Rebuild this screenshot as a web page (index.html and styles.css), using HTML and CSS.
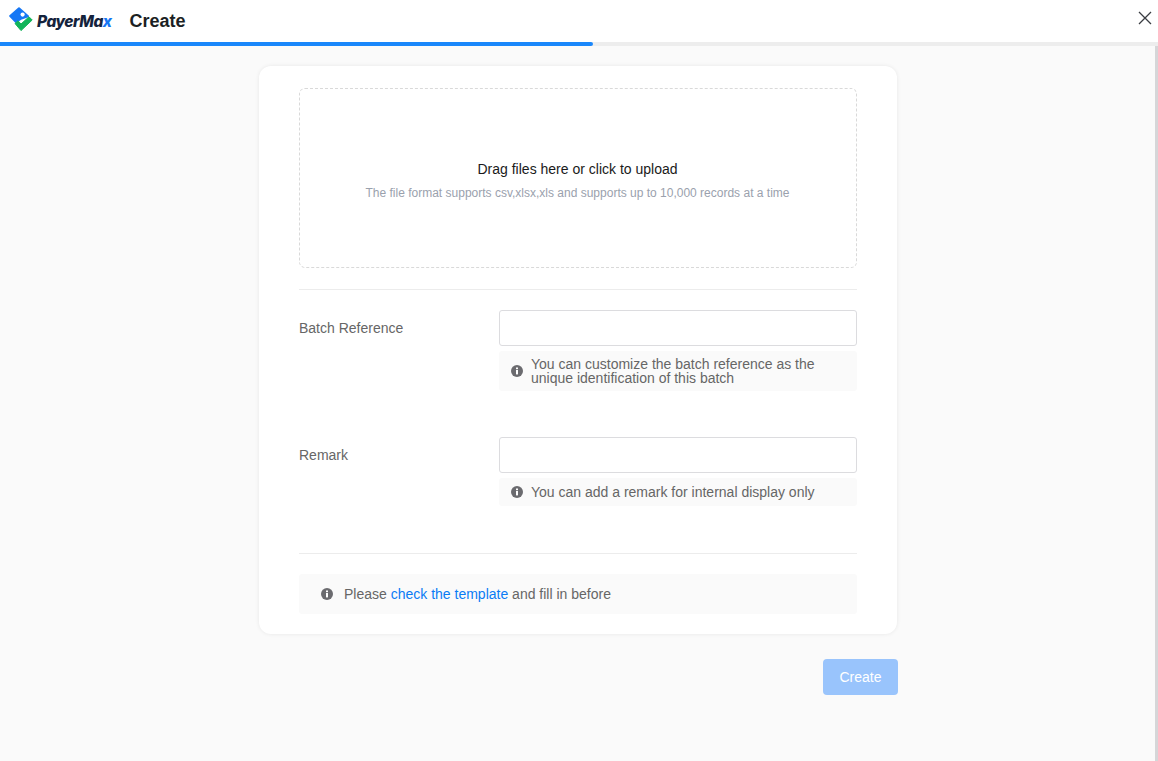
FILE: index.html
```html
<!DOCTYPE html>
<html lang="en">
<head>
<meta charset="utf-8">
<title>Create</title>
<link rel="stylesheet" href="styles.css">
</head>
<body>
<header class="topbar">
  <div class="brand">
    <svg class="logo" width="24" height="25" viewBox="0 0 24 25">
      <path d="M10 1.2 L1.2 9 L7 15 L12.5 11.5 L19 9.2 Z" fill="#1677f5" stroke="#1677f5" stroke-width="2" stroke-linejoin="round"/>
      <circle cx="13.6" cy="7.6" r="2.1" fill="#fff"/>
      <path d="M6 16.5 L12 23.6 L23.2 13 L20 9.8 L12 17 L9 13.8 Z" fill="#12b45a" stroke="#12b45a" stroke-width="1" stroke-linejoin="round"/>
    </svg>
    <span class="brand-name">PayerMa<span class="brand-accent">x</span></span>
  </div>
  <h1 class="page-title">Create</h1>
  <button class="close" aria-label="Close">
    <svg width="14" height="14" viewBox="0 0 14 14"><path d="M1 1 L13 13 M13 1 L1 13" stroke="#3a3d42" stroke-width="1.3" fill="none"/></svg>
  </button>
</header>
<div class="progress"><div class="progress-fill"></div></div>
<main class="main">
  <div class="column">
    <section class="card">
      <div class="dropzone">
        <p class="drop-title">Drag files here or click to upload</p>
        <p class="drop-hint">The file format supports csv,xlsx,xls and supports up to 10,000 records at a time</p>
      </div>
      <hr class="divider divider-top">
      <div class="field field-batch">
        <label class="field-label">Batch Reference</label>
        <div class="field-body">
          <input class="input" type="text">
          <div class="tip">
            <svg class="info" width="12" height="12" viewBox="0 0 12 12"><circle cx="6" cy="6" r="6" fill="#6b6b6f"/><rect x="5" y="5" width="2" height="4.4" fill="#fff"/><rect x="5" y="2.5" width="2" height="1.7" fill="#fff"/></svg>
            <span>You can customize the batch reference as the unique identification of this batch</span>
          </div>
        </div>
      </div>
      <div class="field field-remark">
        <label class="field-label">Remark</label>
        <div class="field-body">
          <input class="input" type="text">
          <div class="tip tip-single">
            <svg class="info" width="12" height="12" viewBox="0 0 12 12"><circle cx="6" cy="6" r="6" fill="#6b6b6f"/><rect x="5" y="5" width="2" height="4.4" fill="#fff"/><rect x="5" y="2.5" width="2" height="1.7" fill="#fff"/></svg>
            <span>You can add a remark for internal display only</span>
          </div>
        </div>
      </div>
      <hr class="divider">
      <div class="notice">
        <svg class="info" width="12" height="12" viewBox="0 0 12 12"><circle cx="6" cy="6" r="6" fill="#6b6b6f"/><rect x="5" y="5" width="2" height="4.4" fill="#fff"/><rect x="5" y="2.5" width="2" height="1.7" fill="#fff"/></svg>
        <span>Please <a class="link" href="#">check the template</a> and fill in before</span>
      </div>
    </section>
    <div class="actions">
      <button class="primary" disabled>Create</button>
    </div>
  </div>
</main>
<div class="scroll-edge"></div>
</body>
</html>
```
FILE: styles.css
```css
* { box-sizing: border-box; }
html, body { height: 100%; }
body {
  margin: 0;
  background: #fafafa;
  font-family: "Liberation Sans", Arial, sans-serif;
  color: #666;
  overflow: hidden;
  display: flex;
  flex-direction: column;
  position: relative;
}
.topbar {
  height: 42px;
  flex: none;
  background: #fff;
  display: flex;
  align-items: center;
  padding: 0 5px 0 9px;
}
.brand { display: flex; align-items: center; gap: 4px; }
.logo { display: block; margin-bottom: 4px; }
.brand-name {
  font-family: Inter, "Liberation Sans", sans-serif;
  font-style: italic;
  font-weight: 800;
  font-size: 15.5px;
  letter-spacing: -0.5px;
  color: #14233c;
}
.brand-accent { color: #1677f5; }
.page-title {
  margin: 0 0 0 18px;
  font-family: "Liberation Sans", Arial, sans-serif;
  font-size: 18px;
  font-weight: 700;
  color: #1c1f24;
}
.close {
  margin-left: auto;
  margin-bottom: 6px;
  padding: 0;
  width: 16px;
  height: 16px;
  border: 0;
  background: none;
  display: flex;
  align-items: center;
  justify-content: center;
}
.progress { height: 4px; flex: none; background: #ededed; }
.progress-fill { width: 593px; height: 100%; background: #1a87fb; border-radius: 0 2px 2px 0; }
.main { flex: 1; display: flex; justify-content: center; padding-top: 20px; }
.column { width: 639px; margin-left: -1px; }
.card {
  width: 638px;
  height: 568px;
  background: #fff;
  border-radius: 12px;
  box-shadow: 0 0 4px rgba(0, 0, 0, 0.08);
  padding: 22px 40px 20px;
}
.dropzone {
  height: 180px;
  border: 1px dashed #d9d9d9;
  border-radius: 6px;
  display: flex;
  flex-direction: column;
  align-items: center;
  padding: 71px 1px 0 0;
}
.drop-title { margin: 0; font-size: 14px; line-height: 18px; color: #1a1a1a; }
.drop-hint { margin: 7px 0 0; font-size: 12px; line-height: 16px; color: #9aa1ad; }
.divider { margin: 0; border: 0; border-top: 1px solid #ececec; margin-top: 47px; }
.divider-top { margin-top: 21px; }
.field { display: flex; }
.field-batch { margin-top: 20px; }
.field-remark { margin-top: 46px; }
.field-label { width: 200px; font-size: 14px; line-height: 36px; color: #666; }
.field-body { width: 358px; }
.input {
  display: block;
  width: 100%;
  height: 36px;
  border: 1px solid #dcdcdf;
  border-radius: 3px;
  background: #fff;
  outline: none;
}
.tip {
  margin-top: 5px;
  min-height: 28px;
  padding: 6px 12px;
  display: flex;
  align-items: center;
  gap: 8px;
  background: #fafafa;
  border-radius: 3px;
  font-size: 14px;
  line-height: 14px;
  color: #666;
}
.info { flex: none; display: block; }
.tip-single { height: 28px; }
.notice {
  margin-top: 20px;
  height: 40px;
  background: #fafafa;
  border-radius: 3px;
  padding-left: 22px;
  display: flex;
  align-items: center;
  gap: 11px;
  font-size: 14px;
  color: #666;
}
.link { color: #0a7cf5; text-decoration: none; }
.actions { display: flex; justify-content: flex-end; margin-top: 25px; }
.primary {
  width: 75px;
  height: 36px;
  border: 0;
  border-radius: 4px;
  background: #99c4fc;
  color: #fff;
  font-family: "Liberation Sans", Arial, sans-serif;
  font-size: 14px;
}
.scroll-edge {
  position: absolute;
  right: 0;
  top: 46px;
  bottom: 0;
  width: 3px;
  background: #d6d6d8;
}
```
